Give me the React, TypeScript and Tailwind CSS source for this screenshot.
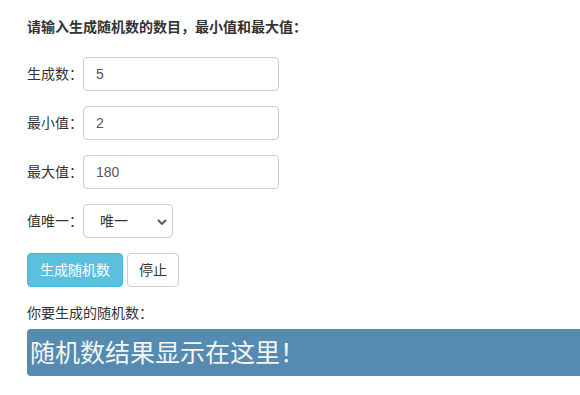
import React from "react";

const FIELDS = [
  { label: "生成数：", value: "5" },
  { label: "最小值：", value: "2" },
  { label: "最大值：", value: "180" },
];

export default function App() {
  return (
    <div
      className="h-[395px] w-[580px] overflow-hidden bg-white pl-[27px] pt-[17px] text-[14px] text-[#333]"
      style={{ fontFamily: '"Liberation Sans", "Noto Sans CJK SC", sans-serif' }}
    >
      <p className="mb-[20px] h-[20px] text-[14px] font-bold leading-[20px] text-[#333]">
        请输入生成随机数的数目，最小值和最大值：
      </p>

      <div className="flex flex-col gap-[15px]">
        {FIELDS.map((f) => (
          <div key={f.label} className="flex h-[34px] items-center">
            <label className="w-[56px] leading-[20px]">{f.label}</label>
            <input
              defaultValue={f.value}
              className="h-[34px] w-[196px] rounded-[4px] border border-[#ccc] bg-white px-[12px] text-[14px] text-[#555] outline-none"
            />
          </div>
        ))}

        <div className="flex h-[34px] items-center">
          <label className="w-[56px] leading-[20px]">值唯一：</label>
          <div className="relative h-[34px] w-[90px]">
            <select
              defaultValue="唯一"
              className="h-[34px] w-full appearance-none rounded-[4px] border border-[#ccc] bg-white pl-[16px] text-[14px] text-[#333] outline-none"
            >
              <option>唯一</option>
              <option>不唯一</option>
            </select>
            <svg
              className="pointer-events-none absolute right-[6px] top-[15px]"
              width="10"
              height="6"
              viewBox="0 0 10 6"
            >
              <path d="M1 1l4 4 4-4" fill="none" stroke="#555" strokeWidth="1.8" />
            </svg>
          </div>
        </div>

        <div className="flex h-[34px] items-center gap-[4px]">
          <button className="h-[34px] w-[96px] rounded-[4px] border border-[#46b8da] bg-[#5bc0de] text-[14px] text-white">
            生成随机数
          </button>
          <button className="h-[34px] w-[52px] rounded-[4px] border border-[#ccc] bg-white text-[14px] text-[#333]">
            停止
          </button>
        </div>
      </div>

      <p className="mt-[16px] h-[20px] leading-[20px]">你要生成的随机数：</p>

      <div className="mt-[6px] flex h-[47px] w-[600px] items-center rounded-[4px] bg-[#558bb0] pl-[3px] text-[25px] leading-[36px] text-[#f5f5f5]">
        随机数结果显示在这里！
      </div>
    </div>
  );
}
